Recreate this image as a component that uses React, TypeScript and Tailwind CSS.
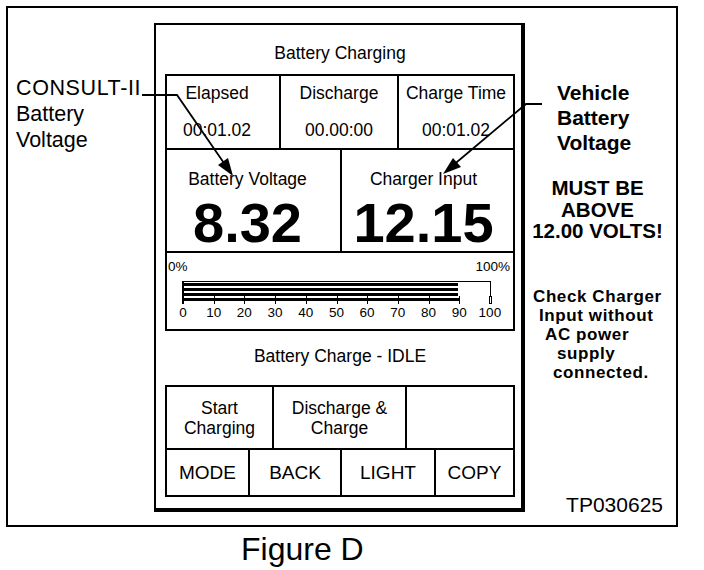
import React from 'react';

const font = "font-['Liberation_Sans',Arial,Helvetica,sans-serif]";

function ProgressBar() {
  const ticks = [1, 2, 3, 4, 5, 6, 7, 8, 9];
  return (
    <svg width="310" height="23" viewBox="0 0 310 23" className="ml-[15px] mt-[6px] block">
      <rect x="0" y="0" width="309" height="1" fill="#000" />
      <rect x="0" y="0" width="2" height="23" fill="#000" />
      <rect x="308" y="0" width="1" height="16" fill="#000" />
      <rect x="307.5" y="15.5" width="2" height="7" fill="#fff" stroke="#000" strokeWidth="1" />
      <rect x="1" y="2" width="275" height="3" fill="#000" />
      <rect x="1" y="7" width="275" height="3" fill="#000" />
      <rect x="1" y="12" width="275" height="3" fill="#000" />
      <rect x="1" y="17" width="277" height="3" fill="#000" />
      {ticks.map((i) => (
        <rect key={i} x={Math.round(1 + 30.7 * i)} y="15" width="1" height="8" fill="#000" />
      ))}
    </svg>
  );
}

export default function App() {
  const scale = ['0', '10', '20', '30', '40', '50', '60', '70', '80', '90', '100'];
  return (
    <div className={`relative w-[704px] h-[570px] bg-white text-black ${font}`}>
      {/* outer figure frame */}
      <div className="ml-[6px] mt-[6px] w-[672px] h-[521px] border-2 border-black flex">
        {/* left callout */}
        <div className="w-[146px] pt-[67px] pl-[8px] text-[21.5px] leading-[26px]">
          <div className="tracking-[0.6px]">CONSULT-II</div>
          <div>Battery</div>
          <div>Voltage</div>
        </div>

        {/* device screen */}
        <div className="w-[371px] h-[489px] mt-[15px] border-t-2 border-l-2 border-r-4 border-b-4 border-black pl-[9px] pr-[6px] flex flex-col">
          <div className="h-[49px] pt-[18px] text-center text-[17.5px] leading-[20px]">Battery Charging</div>

          <div className="border-2 border-black flex flex-col text-[17.5px] leading-[20px]">
            <div className="h-[74px] border-b-2 border-black flex">
              <div className="w-[114px] border-r-2 border-black flex flex-col items-center pt-[7px] gap-[17px] pr-[12px]">
                <span>Elapsed</span>
                <span>00:01.02</span>
              </div>
              <div className="w-[118px] border-r-2 border-black flex flex-col items-center pt-[7px] gap-[17px]">
                <span>Discharge</span>
                <span>00.00:00</span>
              </div>
              <div className="flex-1 flex flex-col items-center pt-[7px] gap-[17px]">
                <span>Charge Time</span>
                <span>00:01.02</span>
              </div>
            </div>

            <div className="h-[103px] border-b-2 border-black flex">
              <div className="w-[175px] border-r-2 border-black flex flex-col items-center pt-[19px] pr-[12px]">
                <span>Battery Voltage</span>
                <span className="mt-[6px] text-[56px] leading-[56px] font-bold">8.32</span>
              </div>
              <div className="flex-1 flex flex-col items-center pt-[19px] pr-[8px]">
                <span>Charger Input</span>
                <span className="mt-[6px] text-[56px] leading-[56px] font-bold">12.15</span>
              </div>
            </div>

            <div className="h-[76px] flex flex-col pt-[6px]">
              <div className="flex justify-between pl-[1px] pr-[3px] text-[13.5px] leading-[16px]">
                <span>0%</span>
                <span>100%</span>
              </div>
              <ProgressBar />
              <div className="ml-[16px] w-[307px] mt-[1px] flex justify-between text-[13.5px] leading-[16px]">
                {scale.map((s) => (
                  <div key={s} className="w-0 flex justify-center whitespace-nowrap">
                    {s}
                  </div>
                ))}
              </div>
            </div>
          </div>

          <div className="mt-[15px] text-center text-[17.5px] leading-[20px]">Battery Charge - IDLE</div>

          <div className="mt-[19px] border-2 border-black flex flex-col">
            <div className="h-[63px] border-b-2 border-black flex text-[17.5px] leading-[20px] text-center">
              <div className="w-[107px] border-r-2 border-black flex items-center justify-center">
                Start
                <br />
                Charging
              </div>
              <div className="w-[133px] border-r-2 border-black flex items-center justify-center">
                Discharge &amp;
                <br />
                Charge
              </div>
              <div className="flex-1" />
            </div>
            <div className="h-[45px] flex text-[19px] leading-[22px]">
              <div className="w-[83px] border-r-2 border-black flex items-center justify-center">MODE</div>
              <div className="w-[92px] border-r-2 border-black flex items-center justify-center">BACK</div>
              <div className="w-[94px] border-r-2 border-black flex items-center justify-center">LIGHT</div>
              <div className="flex-1 flex items-center justify-center">COPY</div>
            </div>
          </div>
        </div>

        {/* right notes */}
        <div className="flex-1 flex flex-col font-bold">
          <div className="pt-[72px] pl-[32px] text-[21px] leading-[25px]">
            <div>Vehicle</div>
            <div>Battery</div>
            <div>Voltage</div>
          </div>
          <div className="mt-[22px] pr-[6px] text-center text-[20.5px] leading-[21.5px]">
            <div>MUST BE</div>
            <div>ABOVE</div>
            <div>12.00 VOLTS!</div>
          </div>
          <div className="mt-[45px] text-[17px] leading-[19px] tracking-[0.6px] whitespace-nowrap">
            <div className="pl-[8px]">Check Charger</div>
            <div className="pl-[14px]">Input without</div>
            <div className="pl-[20px]">AC power</div>
            <div className="pl-[32px]">supply</div>
            <div className="pl-[28px]">connected.</div>
          </div>
          <div className="mt-auto pb-[8px] pr-[13px] text-right text-[21px] leading-[24px] font-normal">TP030625</div>
        </div>
      </div>

      <div className="mt-[4px] pl-[241px] text-[32px] leading-[36px]">Figure D</div>

      {/* callout leader lines */}
      <svg className="absolute inset-0 pointer-events-none" width="704" height="570" viewBox="0 0 704 570">
        <path d="M142 89 H177 L226 160" fill="none" stroke="#000" strokeWidth="1.8" />
        <polygon points="233,170 218,159 228,152" fill="#000" />
        <path d="M542 98 H526 L451 161" fill="none" stroke="#000" strokeWidth="1.8" />
        <polygon points="443,168 453,152 461,161" fill="#000" />
      </svg>
    </div>
  );
}
